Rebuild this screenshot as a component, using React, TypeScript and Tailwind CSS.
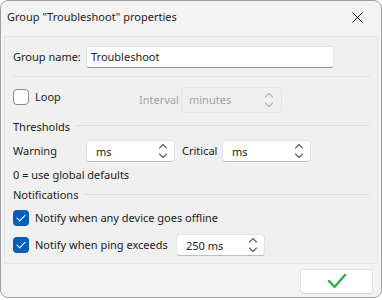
import React from "react";

const font = { fontFamily: '"Segoe UI", "Noto Sans", "Open Sans", sans-serif' };

function Chevrons({ color = "#5c5c5c" }: { color?: string }) {
  return (
    <svg width="10" height="18" viewBox="0 0 10 18" fill="none">
      <path d="M1.5 6 L5 2.5 L8.5 6" stroke={color} strokeWidth="1.1" strokeLinecap="round" strokeLinejoin="round" />
      <path d="M1.5 12 L5 15.5 L8.5 12" stroke={color} strokeWidth="1.1" strokeLinecap="round" strokeLinejoin="round" />
    </svg>
  );
}

function Spinner({ value, w }: { value: string; w: string }) {
  return (
    <div className={`${w} h-[22px] shrink-0 flex items-center justify-between rounded-[4px] bg-white border border-[#e3e3e3] border-b-[#bdbdbd] pl-[9px] pr-[6px]`}>
      <span className="text-[11px] text-[#1b1b1b] leading-none whitespace-nowrap">{value}</span>
      <Chevrons />
    </div>
  );
}

function Check({ checked }: { checked: boolean }) {
  if (checked) {
    return (
      <div className="w-[16px] h-[16px] shrink-0 rounded-[4px] bg-[#005fb8] flex items-center justify-center">
        <svg width="10" height="8" viewBox="0 0 10 8" fill="none">
          <path d="M1 4.2 L3.7 6.8 L9 1.3" stroke="white" strokeWidth="1.1" strokeLinecap="round" strokeLinejoin="round" />
        </svg>
      </div>
    );
  }
  return <div className="w-[16px] h-[16px] shrink-0 rounded-[4px] bg-white border border-[#8a8a8a]" />;
}

export default function App() {
  return (
    <div className="w-[382px] h-[300px] bg-white whitespace-nowrap" style={font}>
      <div className="w-[382px] h-[298px] flex flex-col rounded-[8px] border border-[#a0a0a0] bg-[#f3f3f3] overflow-hidden">
        <div className="h-[35px] shrink-0 flex items-center justify-between pl-[6px] pr-[18px] pb-[3px]">
          <span className="text-[11px] text-[#1b1b1b]">Group "Troubleshoot" properties</span>
          <svg width="11" height="11" viewBox="0 0 11 11" fill="none">
            <path d="M0.5 0.5 L10.5 10.5 M10.5 0.5 L0.5 10.5" stroke="#1b1b1b" strokeWidth="1" />
          </svg>
        </div>
        <div className="mx-[3px] flex-1 flex flex-col border border-[#e3e3e3] bg-[#f0f0f0] pl-[8px] pr-[7px] pt-[9px] text-[11px] text-[#1b1b1b]">
          <div className="h-[22px] flex items-center">
            <span className="w-[73px]">Group name:</span>
            <div className="w-[248px] h-[22px] flex items-center rounded-[4px] bg-white border border-[#e3e3e3] border-b-[#8e8e8e] pl-[4px]">
              Troubleshoot
            </div>
          </div>
          <div className="mt-[8px] h-px bg-[#e0e0e0]" />
          <div className="mt-[10px] h-[26px] flex items-start">
            <div className="mt-[2px] w-[126px] flex items-center">
              <Check checked={false} />
              <span className="ml-[6px]">Loop</span>
            </div>
            <span className="mt-[5px] w-[42px] text-[#a3a3a3]">Interval</span>
            <div className="w-[101px] h-[26px] flex items-center justify-between rounded-[4px] bg-[#f0f0f0] border border-[#e3e3e3] pl-[7px] pr-[7px]">
              <span className="text-[#a3a3a3]">minutes</span>
              <Chevrons color="#b5b5b5" />
            </div>
          </div>
          <div className="mt-[4px] h-[20px] flex items-center">
            <span>Thresholds</span>
            <div className="ml-[6px] mb-[4px] flex-1 h-px bg-[#e0e0e0]" />
          </div>
          <div className="mt-[3px] h-[22px] flex items-center">
            <span className="w-[73px]">Warning</span>
            <Spinner value="ms" w="w-[89px]" />
            <span className="ml-[7px] w-[40px]">Critical</span>
            <Spinner value="ms" w="w-[89px]" />
          </div>
          <div className="mt-[3px] h-[20px] flex items-center">0 = use global defaults</div>
          <div className="h-[20px] flex items-center">
            <span>Notifications</span>
            <div className="ml-[6px] mb-[2px] flex-1 h-px bg-[#e0e0e0]" />
          </div>
          <div className="mt-[3px] h-[20px] flex items-center">
            <Check checked={true} />
            <span className="ml-[6px]">Notify when any device goes offline</span>
          </div>
          <div className="mt-[6px] h-[22px] flex items-center">
            <Check checked={true} />
            <span className="ml-[6px] w-[141px]">Notify when ping exceeds</span>
            <Spinner value="250 ms" w="w-[89px]" />
          </div>
        </div>
        <div className="h-[33px] shrink-0 flex items-center justify-end pr-[8px] pt-[1px]">
          <div className="w-[73px] h-[25px] rounded-[4px] bg-white border border-[#e3e3e3] border-b-[#cfcfcf] flex items-center justify-center">
            <svg width="20" height="18" viewBox="0 0 20 18" fill="none">
              <path d="M2 9 L7.5 15 L18 3" stroke="#2eb04f" strokeWidth="2.5" strokeLinecap="round" strokeLinejoin="round" />
            </svg>
          </div>
        </div>
      </div>
    </div>
  );
}
